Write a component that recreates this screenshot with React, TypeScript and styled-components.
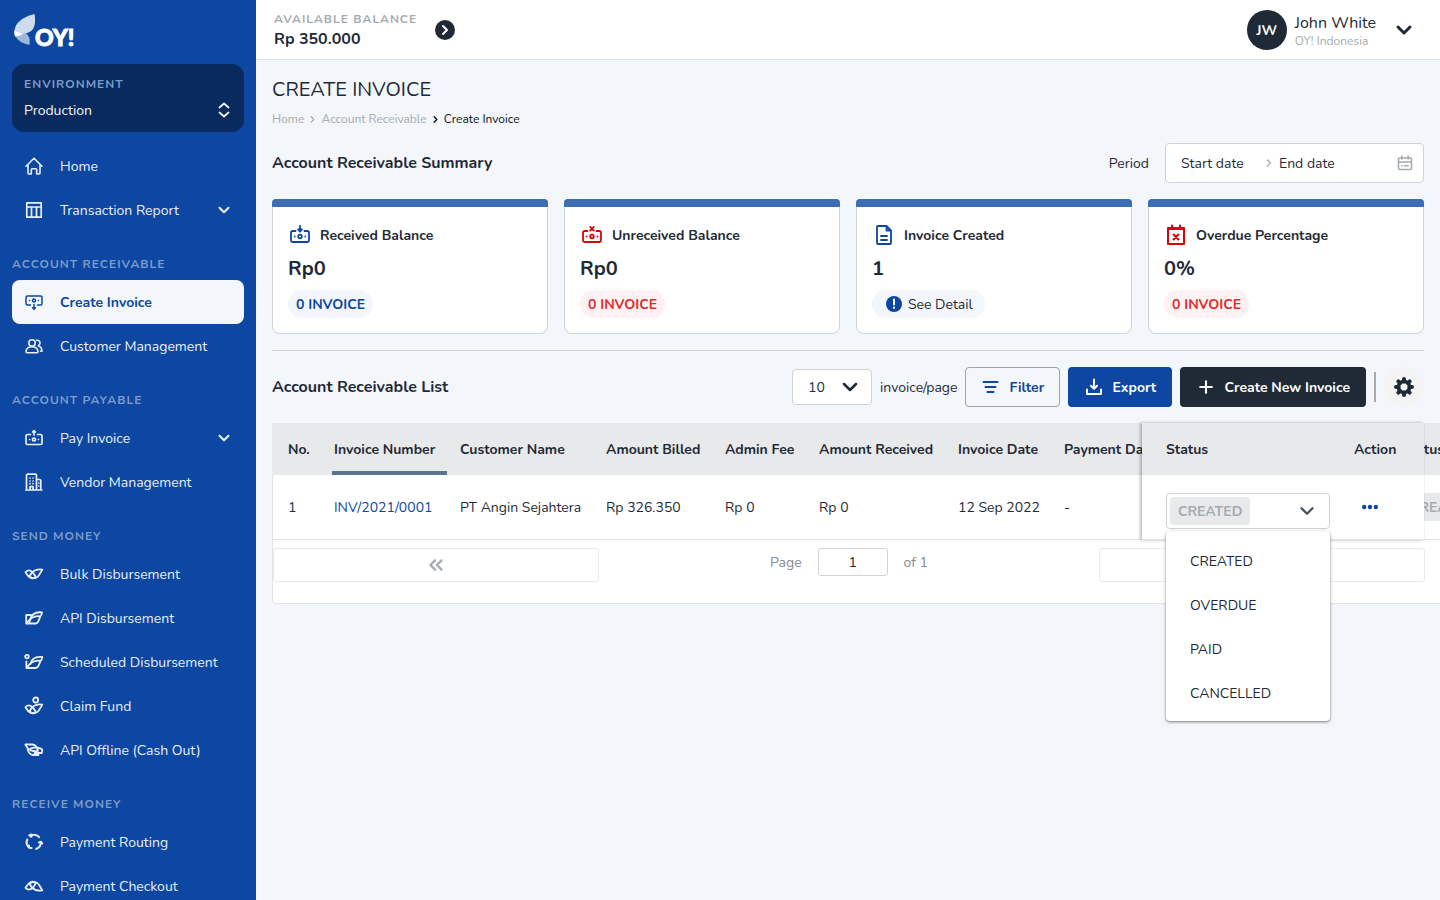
import React from "react";
import styled, { createGlobalStyle, css } from "styled-components";
import { ChevronDown, ChevronRight, ChevronsLeft, ChevronsRight, Plus } from "lucide-react";

const blue = "#0d47a1";
const navy = "#082a5e";
const ink = "#1f2a36";
const page = "#f3f6fb";
const line = "#cfd3d6";
const softLine = "#e7e9ea";
const muted = "#a5abb0";
const red = "#d90404";

const GlobalStyle = createGlobalStyle`
  *, *::before, *::after { box-sizing: border-box; }
  body {
    margin: 0;
    background: ${page};
    color: ${ink};
    font-family: Nunito, "Open Sans", "Noto Sans", sans-serif;
    font-size: 14px;
    line-height: 21px;
  }
  button, input, select { font: inherit; color: inherit; }
  h1, h2, h3, p, ul, dl { margin: 0; padding: 0; }
  ul { list-style: none; }
  a { color: inherit; text-decoration: none; }
  svg { display: block; flex: none; }
`;

const Shell = styled.div`
  display: grid;
  grid-template-columns: 256px minmax(0, 1fr);
  height: 100vh;
`;

/* Sidebar */
const Sidebar = styled.aside`
  background: ${blue};
  color: #e9eff8;
  padding: 12px;
  overflow-y: auto;
  scrollbar-width: none;
`;

const Logo = styled.a`
  display: flex;
  align-items: flex-end;
  height: 36px;
  margin-bottom: 16px;
  color: #fff;
`;

const LogoText = styled.span`
  font-family: Lato, sans-serif;
  font-weight: 900;
  font-size: 23px;
  line-height: 22px;
  -webkit-text-stroke: 1px #fff;
`;

const caps = css`
  font-size: 12px;
  line-height: 16px;
  font-weight: 700;
  letter-spacing: 1px;
  text-transform: uppercase;
`;

const EnvButton = styled.button`
  display: grid;
  grid-template-columns: 1fr auto;
  align-items: center;
  align-content: center;
  row-gap: 8px;
  width: 100%;
  height: 68px;
  padding: 4px 10px 4px 12px;
  border: 0;
  border-radius: 12px;
  background: ${navy};
  color: #f3f6fb;
  text-align: left;
`;

const EnvLabel = styled.span`
  ${caps}
  grid-column: 1 / -1;
  color: #7d9bcb;
`;

const Group = styled.nav`
  &:first-of-type { margin-top: 12px; }
`;

const GroupTitle = styled.h2`
  ${caps}
  padding: 24px 0 8px;
  color: #7d9bcb;
`;

const NavLink = styled.a<{ $active?: boolean }>`
  display: grid;
  grid-template-columns: 20px 1fr auto;
  align-items: center;
  gap: 16px;
  height: 44px;
  padding: 0 11px 0 12px;
  border-radius: 8px;
  white-space: nowrap;
  ${(p) => p.$active && css`
    background: ${page};
    color: ${blue};
    font-weight: 700;
  `}
`;

/* Top bar */
const Content = styled.div`
  min-width: 0;
  overflow: hidden;
`;

const TopBar = styled.header`
  display: flex;
  align-items: center;
  justify-content: space-between;
  height: 60px;
  padding: 0 24px 0 18px;
  background: #fff;
  box-shadow: inset 0 -1px 0 #e1e4e8;
`;

const Cluster = styled.div<{ $gap: number }>`
  display: flex;
  align-items: center;
  gap: ${(p) => p.$gap}px;
`;

const BalanceBlock = styled.div`
  padding-top: 2px;
`;

const BalanceLabel = styled.p`
  ${caps}
  color: ${muted};
`;

const Balance = styled.p`
  font-size: 16px;
  line-height: 24px;
  font-weight: 700;
`;

const RoundButton = styled.button<{ $size: number; $bg: string }>`
  display: grid;
  place-items: center;
  width: ${(p) => p.$size}px;
  height: ${(p) => p.$size}px;
  padding: 0;
  border: 0;
  border-radius: 50%;
  background: ${(p) => p.$bg};
`;

const Avatar = styled.span`
  display: grid;
  place-items: center;
  width: 40px;
  height: 40px;
  border-radius: 50%;
  background: ${ink};
  color: #fff;
  font-weight: 700;
`;

const UserBlock = styled.div`
  padding-top: 1px;
`;

const UserName = styled.p`
  font-size: 16px;
  line-height: 22px;
`;

const UserOrg = styled.p`
  font-size: 12px;
  line-height: 15px;
  color: ${muted};
`;

const PlainButton = styled.button`
  display: grid;
  place-items: center;
  padding: 0;
  border: 0;
  background: none;
`;

/* Page */
const Main = styled.main`
  padding: 16px;
`;

const PageTitle = styled.h1`
  font-size: 20px;
  line-height: 28px;
  font-weight: 400;
`;

const Crumbs = styled.nav`
  display: flex;
  align-items: center;
  gap: 3px;
  margin-top: 6px;
  font-size: 12px;
  line-height: 18px;
  color: ${muted};
`;

const Current = styled.span`
  display: flex;
  align-items: center;
  gap: 3px;
  color: #0d1117;
`;

const Bar = styled.div<{ $top: number }>`
  display: flex;
  align-items: center;
  justify-content: space-between;
  height: 40px;
  margin-top: ${(p) => p.$top}px;
`;

const SectionTitle = styled.h2`
  font-size: 16px;
  line-height: 24px;
  font-weight: 700;
`;

const Range = styled.div`
  display: flex;
  align-items: center;
  gap: 4px;
  width: 259px;
  height: 40px;
  padding: 0 10px 0 15px;
  border: 1px solid ${line};
  border-radius: 4px;
  background: #fff;
  color: ${muted};
`;

const DateInput = styled.input<{ $w: number }>`
  width: ${(p) => p.$w}px;
  padding: 0;
  border: 0;
  outline: 0;
  background: none;
  color: ${ink};
  &::placeholder { color: ${ink}; opacity: 1; }
`;

const Fill = styled.span`
  flex: 1;
`;

const Cards = styled.div`
  display: grid;
  grid-template-columns: repeat(4, minmax(0, 1fr));
  gap: 16px;
  margin-top: 16px;
  padding-bottom: 16px;
  border-bottom: 1px solid ${line};
`;

const Card = styled.section`
  position: relative;
  padding: 24px 16px 16px;
  border-radius: 4px 4px 8px 8px;
  background: #fff;
  box-shadow: inset 0 0 0 1px ${line};
  &::before {
    content: "";
    position: absolute;
    inset: 0 0 auto;
    height: 8px;
    border-radius: 4px 4px 0 0;
    background: #3d6db5;
  }
`;

const CardTitle = styled.h3`
  display: flex;
  align-items: center;
  gap: 8px;
  height: 24px;
  font-size: 14px;
  font-weight: 700;
`;

const CardValue = styled.p`
  margin: 8px 0;
  font-size: 20px;
  line-height: 27px;
  font-weight: 700;
`;

const Pill = styled.span<{ $tone: "blue" | "red" }>`
  display: flex;
  align-items: center;
  width: fit-content;
  height: 28px;
  padding: 0 8px;
  border-radius: 14px;
  font-weight: 700;
  color: ${(p) => (p.$tone === "blue" ? blue : "#dd2e2e")};
  background: ${(p) => (p.$tone === "blue" ? page : "#fdf1f1")};
`;

const DetailButton = styled.button`
  display: flex;
  align-items: center;
  gap: 6px;
  height: 28px;
  padding: 0 12px 0 14px;
  border: 0;
  border-radius: 14px;
  background: ${page};
`;

const SizeBox = styled.label`
  display: flex;
  align-items: center;
  gap: 8px;
`;

const SelectWrap = styled.span`
  display: grid;
  align-items: center;
  width: 80px;
  > * { grid-area: 1 / 1; }
  > svg { justify-self: end; margin-right: 10px; pointer-events: none; }
`;

const Select = styled.select`
  width: 80px;
  height: 36px;
  padding: 0 15px;
  border: 1px solid ${line};
  border-radius: 4px;
  background: #fff;
  appearance: none;
`;

const Button = styled.button<{ $kind: "outline" | "blue" | "dark" }>`
  display: flex;
  align-items: center;
  gap: 8px;
  height: 40px;
  padding: 0 15px;
  border: 1px solid transparent;
  border-radius: 4px;
  font-weight: 700;
  white-space: nowrap;
  color: #fff;
  ${(p) => p.$kind === "outline" && css`
    min-width: 95px;
    background: ${page};
    border-color: #9fa5aa;
    color: ${blue};
  `}
  ${(p) => p.$kind === "blue" && css`
    min-width: 104px;
    background: ${blue};
  `}
  ${(p) => p.$kind === "dark" && css`background: ${ink};`}
`;

const VRule = styled.span`
  width: 2px;
  height: 30px;
  background: #a5abb0;
`;

/* Table */
const TableArea = styled.div`
  position: relative;
  margin-top: 16px;
`;

const TableCard = styled.div`
  width: calc(100% + 48px);
  border-radius: 0 0 4px 4px;
  background: #fff;
  box-shadow: inset 0 0 0 1px #e1e4e6;
`;

const Table = styled.table`
  width: 100%;
  border-collapse: separate;
  border-spacing: 0;
  table-layout: fixed;
  th {
    height: 52px;
    background: ${softLine};
    text-align: left;
    font-weight: 700;
  }
  td {
    height: 65px;
    border-bottom: 1px solid #e1e4e6;
  }
  th, td {
    padding: 0 0 0 16px;
    white-space: nowrap;
  }
`;

const SortedTh = styled.th`
  position: relative;
  &::after {
    content: "";
    position: absolute;
    left: 14px;
    bottom: 0;
    width: 115px;
    height: 4px;
    background: #5b738b;
  }
`;

const InvoiceLink = styled.a`
  color: ${blue};
`;

const Tag = styled.span`
  display: flex;
  align-items: center;
  width: fit-content;
  height: 28px;
  padding: 0 8px;
  border-radius: 4px;
  background: ${softLine};
  color: ${muted};
  font-weight: 700;
`;

const Pinned = styled.div`
  position: absolute;
  top: 0;
  right: 0;
  width: 282px;
  background: #fff;
  box-shadow: -2px 0 3px rgba(31, 42, 54, 0.28), 0 0 2px rgba(31, 42, 54, 0.12);
  th, td { padding-left: 24px; }
  td { vertical-align: top; }
`;

const StatusCell = styled.div`
  position: relative;
  width: 164px;
  margin-top: 18px;
`;

const StatusButton = styled.button`
  display: flex;
  align-items: center;
  justify-content: space-between;
  width: 100%;
  height: 36px;
  padding: 0 11px 0 3px;
  border: 1px solid ${line};
  border-radius: 4px;
  background: #fff;
`;

const Menu = styled.ul`
  position: absolute;
  z-index: 2;
  top: 38px;
  left: 0;
  right: 0;
  padding: 8px 0 6px;
  border-radius: 4px;
  background: #fff;
  box-shadow: 0 1px 3px rgba(31, 42, 54, 0.6);
`;

const Option = styled.li`
  display: flex;
  align-items: center;
  height: 44px;
  padding: 0 24px;
`;

const MoreButton = styled(PlainButton)`
  margin: 24px 0 0 8px;
  height: 16px;
`;

const Pager = styled.div`
  display: grid;
  grid-template-columns: 326fr 500fr 326fr;
  align-items: start;
  height: 64px;
  padding: 8px 0;
  margin-right: 47px;
  margin-left: 1px;
`;

const PagerButton = styled.button`
  display: grid;
  place-items: center;
  height: 34px;
  padding: 0;
  border: 1px solid ${softLine};
  border-radius: 3px;
  background: #fff;
  color: ${muted};
`;

const PageOf = styled.label`
  display: flex;
  align-items: center;
  justify-content: center;
  gap: 16px;
  color: #848b92;
`;

const PageInput = styled.input`
  width: 70px;
  height: 28px;
  padding: 0;
  border: 1px solid ${line};
  border-radius: 3px;
  background: #fff;
  color: ${ink};
  text-align: center;
`;

/* Icons */
type IconProps = { children: React.ReactNode; size?: number; color?: string; w?: number };
const Icon = ({ children, size = 20, color = "currentColor", w = 1.6 }: IconProps) => (
  <svg width={size} height={size} viewBox={`0 0 ${size} ${size}`} fill="none" stroke={color} strokeWidth={w} strokeLinecap="round" strokeLinejoin="round" aria-hidden="true">
    {children}
  </svg>
);

const leafPair = (
  <>
    <path d="M1.500 8.200C4.500 5 8.500 6 11.800 13.200 8.500 15.500 5 14.500 1.500 8.200z" />
    <path d="M18.300 5.600C13.500 4.600 8.500 6.500 5.600 12 8.500 15.500 12.500 14.500 14.800 11.500 16 9.500 17.500 7 18.300 5.600z" />
  </>
);

const icons: Record<string, React.ReactNode> = {
  home: <Icon><path d="M2 10.2 10 2.2l8 8M4 8.8V17a1 1 0 0 0 1 1h2.3v-4.2a1 1 0 0 1 1-1h3.4a1 1 0 0 1 1 1V18H15a1 1 0 0 0 1-1V8.800" /></Icon>,
  report: <Icon w={1.7}><path d="M2.800 2.800h14.400v14.400H2.800zM2.800 7h14.400M7.500 7v10M12.500 7v10" /></Icon>,
  create: (
    <Icon w={1.5}>
      <path d="M6.500 13H3.500A1.500 1.500 0 0 1 2 11.500v-6A1.500 1.500 0 0 1 3.500 4h13A1.500 1.500 0 0 1 18 5.500v6a1.500 1.500 0 0 1-1.500 1.500h-3M10 12.500v4.500M8.600 15.800 10 17.200l1.400-1.400" />
      <circle cx="10" cy="8.500" r="1.500" />
      <path d="M5.600 8.500h.01M14.400 8.500h.01" />
    </Icon>
  ),
  pay: (
    <Icon w={1.7}>
      <path d="M6.500 6.500H3.500A1.500 1.500 0 0 0 2 8v7a1.500 1.500 0 0 0 1.500 1.500h13A1.500 1.500 0 0 0 18 15V8a1.500 1.500 0 0 0-1.500-1.500h-3M10 7V2.800M8.600 4 10 2.600 11.400 4" />
      <circle cx="10" cy="11.500" r="1.500" />
      <path d="M5.600 11.500h.01M14.400 11.500h.01" />
    </Icon>
  ),
  users: (
    <Icon w={1.6}>
      <circle cx="8" cy="7" r="3.200" />
      <path d="M2 15.500c.3-3 2.600-4.800 6-4.800s5.700 1.800 6 4.800c0 .8-.5 1.200-1.200 1.200H3.200c-.7 0-1.200-.4-1.200-1.200zM12.600 4.200c2.300-.2 3.600 1.300 3.400 3-.1 1.100-.7 2-1.700 2.500 2.300.9 3.600 2.800 3.700 5.500h-1.500" />
    </Icon>
  ),
  building: (
    <Icon w={1.7}>
      <path d="M2.500 18V3.500A1.300 1.300 0 0 1 3.800 2.200h7.400a1.300 1.300 0 0 1 1.300 1.300V18M12.500 7.500h3a1.300 1.300 0 0 1 1.300 1.300V18M1.800 18h16M6 18v-3.300h3V18M6 6h.01M9 6h.01M6 9h.01M9 9h.01M6 11.700h.01M9 11.700h.01M14.800 11h.01M14.800 14h.01" />
    </Icon>
  ),
  bulk: <Icon w={1.8}>{leafPair}</Icon>,
  api: (
    <Icon w={1.8}>
      <path d="M7 7H2.200v8.500h9.300C13.500 15.500 15 13 16.200 8.500 12 7.500 7 9.500 2.700 15" />
      <path d="M6.300 11.500C7.500 6.500 11 3.600 18 4.400 17.800 6.500 17 8 16 8.700M5.500 15c0-1.500.2-2.500.8-3.500" />
    </Icon>
  ),
  scheduled: (
    <Icon w={1.8}>
      <circle cx="3" cy="4.600" r="1.800" />
      <path d="M2.400 9.500V16h9.300c2-.3 3.500-2.500 4.600-7C12 8 7 10 2.900 15.500" />
      <path d="M6.300 12C7.500 7 11.200 4.200 18.300 5c-.2 2-1 3.500-2 4.200" />
    </Icon>
  ),
  claim: (
    <Icon w={1.8}>
      <circle cx="11.700" cy="4" r="2.500" />
      <g transform="translate(0 3)">{leafPair}</g>
    </Icon>
  ),
  offline: (
    <Icon w={1.8}>
      <path d="M1.300 4.500h7.200c3 .2 4.700 3 5.500 6.300C9.500 12 4 10.500 1.300 4.500z" />
      <path d="M6.500 8.500c4.500-2 10-.5 11.800 1.200l-.5 3.300h-7.300M3.500 9c1 3.500 3 5.800 5.500 6h5.500" />
    </Icon>
  ),
  routing: (
    <Icon w={2}>
      <path d="M7.500 3.200a7.200 7.200 0 0 1 7.700 1.900M3.300 7.500a7.200 7.200 0 0 0 1.600 8M12.200 16.900a7.200 7.200 0 0 0 4.800-6M5.300 3.500l2-1 .2 2.300zM15 10.500l2-.8 1.200 1.800M4.800 13.500l.5 2.200 2.200.3" />
    </Icon>
  ),
  checkout: <Icon w={1.8}><g transform="matrix(1 0 0 -1 0 20)">{leafPair}</g></Icon>,
};

const moneyBox = (
  <>
    <path d="M7.500 8H4.500A1.500 1.500 0 0 0 3 9.500v8A1.500 1.500 0 0 0 4.500 19h15a1.500 1.500 0 0 0 1.500-1.500v-8A1.500 1.500 0 0 0 19.500 8h-3" />
    <circle cx="12" cy="13.500" r="1.800" />
    <path d="M6.700 13.500h.01M17.300 13.500h.01" />
  </>
);

const MoneyIn = () => (
  <Icon size={24} color={blue} w={1.8}>
    {moneyBox}
    <path d="M12 3v5" />
    <path d="M10 6.500h4l-2 2.200z" fill={blue} />
  </Icon>
);

const MoneyOff = () => (
  <Icon size={24} color={red} w={1.8}>
    {moneyBox}
    <path d="M10.200 3.900l3.600 3.600M13.800 3.900l-3.600 3.600" />
  </Icon>
);

const Doc = () => (
  <Icon size={24} color={blue} w={1.8}>
    <path d="M14.500 3H6a1 1 0 0 0-1 1v16a1 1 0 0 0 1 1h12a1 1 0 0 0 1-1V7.500zM14.500 3v4.500H19M9 13h6M9 17h6" />
  </Icon>
);

const CalendarOff = () => (
  <Icon size={24} color={red} w={2}>
    <path d="M4 5h16v16H4zM8 2.500V5M16 2.500V5M9.500 11.500l5 5M14.500 11.500l-5 5" />
    <path d="M4 6h16" />
  </Icon>
);

const Calendar = () => (
  <Icon size={16} w={1.6}>
    <path d="M2.500 3h11a1 1 0 0 1 1 1v9.500a1 1 0 0 1-1 1h-11a1 1 0 0 1-1-1V4a1 1 0 0 1 1-1zM4.800 1v3M11.200 1v3M1.500 7h13M4.600 10.700h.4M7.500 10.700h3.800" />
  </Icon>
);

const Alert = () => (
  <svg width="16" height="16" viewBox="0 0 16 16" aria-hidden="true">
    <circle cx="8" cy="8" r="8" fill={blue} />
    <path d="M8 3.500v5M8 11.500v.6" stroke="#fff" strokeWidth="2" strokeLinecap="round" />
  </svg>
);

const UpDown = () => (
  <Icon w={1.7}><path d="M5.500 7.500 10 3.500l4.500 4M5.500 12.500l4.500 4 4.500-4" /></Icon>
);

const FilterIcon = () => (
  <Icon w={2}><path d="M2.500 5h14M4.500 10h10M6.500 15h6" /></Icon>
);

const ExportIcon = () => (
  <Icon w={2}><path d="M10 2.500v9M7 8.800l3 3 3-3M3 12.500V17h14v-4.500" /></Icon>
);

const Gear = () => (
  <Icon color={ink} w={3.6}>
    <circle cx="10" cy="10" r="5.500" />
    {[0, 45, 90, 135, 180, 225, 270, 315].map((a) => (
      <path key={a} d="M10 2v2.500" transform={`rotate(${a} 10 10)`} strokeWidth="4" />
    ))}
  </Icon>
);

const Dots = () => (
  <svg width="16" height="6" viewBox="0 0 16 6" fill={blue} aria-hidden="true">
    <circle cx="2.200" cy="3" r="2.200" /><circle cx="8" cy="3" r="2.200" /><circle cx="13.800" cy="3" r="2.200" />
  </svg>
);

const LogoMark = () => (
  <svg width="23" height="34" viewBox="0 0 23 34" aria-hidden="true">
    <path d="M22.500 0C10 3.500 1 9 2.500 21.500 10 21.500 18 19 21 15c2.500-4 2.500-10 1.500-15z" fill="#cfdcee" />
    <path d="M2.500 20C4.500 26 10 29.500 17.300 31c1-5.500.5-9.500-4.500-12.300z" fill="#9db6da" />
    <path d="M2.500 16c3.300 2.700 6 3.500 9.400 3.600-2.600 1.600-5.600 2.600-8.600 2.900-.8-2.200-1.100-4.600-.8-6.500z" fill="#fff" />
  </svg>
);

type Item = { label: string; icon: string; active?: boolean; more?: boolean };
const groups: { title?: string; items: Item[] }[] = [
  { items: [{ label: "Home", icon: "home" }, { label: "Transaction Report", icon: "report", more: true }] },
  { title: "Account Receivable", items: [{ label: "Create Invoice", icon: "create", active: true }, { label: "Customer Management", icon: "users" }] },
  { title: "Account Payable", items: [{ label: "Pay Invoice", icon: "pay", more: true }, { label: "Vendor Management", icon: "building" }] },
  {
    title: "Send Money",
    items: [
      { label: "Bulk Disbursement", icon: "bulk" },
      { label: "API Disbursement", icon: "api" },
      { label: "Scheduled Disbursement", icon: "scheduled" },
      { label: "Claim Fund", icon: "claim" },
      { label: "API Offline (Cash Out)", icon: "offline" },
    ],
  },
  { title: "Receive Money", items: [{ label: "Payment Routing", icon: "routing" }, { label: "Payment Checkout", icon: "checkout" }] },
];

const columns = [46, 126, 146, 119, 94, 139, 106, 338];
const statuses = ["CREATED", "OVERDUE", "PAID", "CANCELLED"];

export default function App() {
  return (
    <>
      <GlobalStyle />
      <Shell>
        <Sidebar>
          <Logo href="#" aria-label="OY!"><LogoMark /><LogoText>OY!</LogoText></Logo>
          <EnvButton>
            <EnvLabel>Environment</EnvLabel>
            Production
            <UpDown />
          </EnvButton>
          {groups.map((g, i) => (
            <Group key={i} aria-label={g.title ?? "General"}>
              {g.title && <GroupTitle>{g.title}</GroupTitle>}
              {g.items.map((it) => (
                <NavLink key={it.label} href="#" $active={it.active}>
                  {icons[it.icon]}
                  {it.label}
                  {it.more && <ChevronDown size={18} strokeWidth={2.8} />}
                </NavLink>
              ))}
            </Group>
          ))}
        </Sidebar>

        <Content>
          <TopBar>
            <Cluster $gap={18}>
              <BalanceBlock>
                <BalanceLabel>Available Balance</BalanceLabel>
                <Balance>Rp 350.000</Balance>
              </BalanceBlock>
              <RoundButton $size={20} $bg={ink} aria-label="Balance details">
                <ChevronRight size={16} color="#fff" strokeWidth={3} />
              </RoundButton>
            </Cluster>
            <Cluster $gap={16}>
              <Cluster $gap={8}>
                <Avatar>JW</Avatar>
                <UserBlock>
                  <UserName>John White</UserName>
                  <UserOrg>OY! Indonesia</UserOrg>
                </UserBlock>
              </Cluster>
              <PlainButton aria-label="Account menu">
                <ChevronDown size={24} strokeWidth={3} />
              </PlainButton>
            </Cluster>
          </TopBar>

          <Main>
            <PageTitle>CREATE INVOICE</PageTitle>
            <Crumbs aria-label="Breadcrumb">
              <a href="#">Home</a>
              <ChevronRight size={11} strokeWidth={2.5} />
              <a href="#">Account Receivable</a>
              <Current><ChevronRight size={11} strokeWidth={3} />Create Invoice</Current>
            </Crumbs>

            <Bar $top={15}>
              <SectionTitle>Account Receivable Summary</SectionTitle>
              <Cluster $gap={16}>
                <label htmlFor="start">Period</label>
                <Range>
                  <DateInput id="start" $w={78} placeholder="Start date" />
                  <ChevronRight size={12} strokeWidth={2.5} />
                  <DateInput $w={90} placeholder="End date" aria-label="End date" />
                  <Fill />
                  <Calendar />
                </Range>
              </Cluster>
            </Bar>

            <Cards>
              <Card>
                <CardTitle><MoneyIn />Received Balance</CardTitle>
                <CardValue>Rp0</CardValue>
                <Pill $tone="blue">0 INVOICE</Pill>
              </Card>
              <Card>
                <CardTitle><MoneyOff />Unreceived Balance</CardTitle>
                <CardValue>Rp0</CardValue>
                <Pill $tone="red">0 INVOICE</Pill>
              </Card>
              <Card>
                <CardTitle><Doc />Invoice Created</CardTitle>
                <CardValue>1</CardValue>
                <DetailButton><Alert />See Detail</DetailButton>
              </Card>
              <Card>
                <CardTitle><CalendarOff />Overdue Percentage</CardTitle>
                <CardValue>0%</CardValue>
                <Pill $tone="red">0 INVOICE</Pill>
              </Card>
            </Cards>

            <Bar $top={16}>
              <SectionTitle>Account Receivable List</SectionTitle>
              <Cluster $gap={8}>
                <SizeBox>
                  <SelectWrap>
                    <Select defaultValue="10"><option>10</option><option>25</option><option>50</option></Select>
                    <ChevronDown size={24} strokeWidth={2.5} />
                  </SelectWrap>
                  invoice/page
                </SizeBox>
                <Button $kind="outline"><FilterIcon />Filter</Button>
                <Button $kind="blue"><ExportIcon />Export</Button>
                <Button $kind="dark"><Plus size={20} strokeWidth={2.5} />Create New Invoice</Button>
                <VRule />
                <RoundButton $size={40} $bg="#f4f4f4" aria-label="Table settings">
                  <Gear />
                </RoundButton>
              </Cluster>
            </Bar>

            <TableArea>
              <TableCard>
                <Table>
                  <colgroup>
                    {columns.map((w, i) => <col key={i} width={w} />)}
                    <col />
                  </colgroup>
                  <thead>
                    <tr>
                      <th>No.</th>
                      <SortedTh>Invoice Number</SortedTh>
                      <th>Customer Name</th>
                      <th>Amount Billed</th>
                      <th>Admin Fee</th>
                      <th>Amount Received</th>
                      <th>Invoice Date</th>
                      <th>Payment Date</th>
                      <th>Status</th>
                    </tr>
                  </thead>
                  <tbody>
                    <tr>
                      <td>1</td>
                      <td><InvoiceLink href="#">INV/2021/0001</InvoiceLink></td>
                      <td>PT Angin Sejahtera</td>
                      <td>Rp 326.350</td>
                      <td>Rp 0</td>
                      <td>Rp 0</td>
                      <td>12 Sep 2022</td>
                      <td>-</td>
                      <td><Tag>CREATED</Tag></td>
                    </tr>
                  </tbody>
                </Table>
                <Pager>
                  <PagerButton aria-label="Previous page"><ChevronsLeft size={22} strokeWidth={2.5} /></PagerButton>
                  <PageOf>Page<PageInput defaultValue="1" />of 1</PageOf>
                  <PagerButton aria-label="Next page"><ChevronsRight size={22} strokeWidth={2.5} /></PagerButton>
                </Pager>
              </TableCard>

              <Pinned>
                <Table>
                  <colgroup><col width={188} /><col /></colgroup>
                  <thead><tr><th>Status</th><th>Action</th></tr></thead>
                  <tbody>
                    <tr>
                      <td>
                        <StatusCell>
                          <StatusButton role="combobox" aria-expanded="true" aria-controls="status-menu" aria-label="Invoice status">
                            <Tag>CREATED</Tag>
                            <ChevronDown size={22} strokeWidth={2.5} color="#46515c" />
                          </StatusButton>
                          <Menu id="status-menu" role="listbox" aria-label="Invoice status">
                            {statuses.map((s) => <Option key={s} role="option" aria-selected={s === "CREATED"}>{s}</Option>)}
                          </Menu>
                        </StatusCell>
                      </td>
                      <td><MoreButton aria-label="Row actions"><Dots /></MoreButton></td>
                    </tr>
                  </tbody>
                </Table>
              </Pinned>
            </TableArea>
          </Main>
        </Content>
      </Shell>
    </>
  );
}
